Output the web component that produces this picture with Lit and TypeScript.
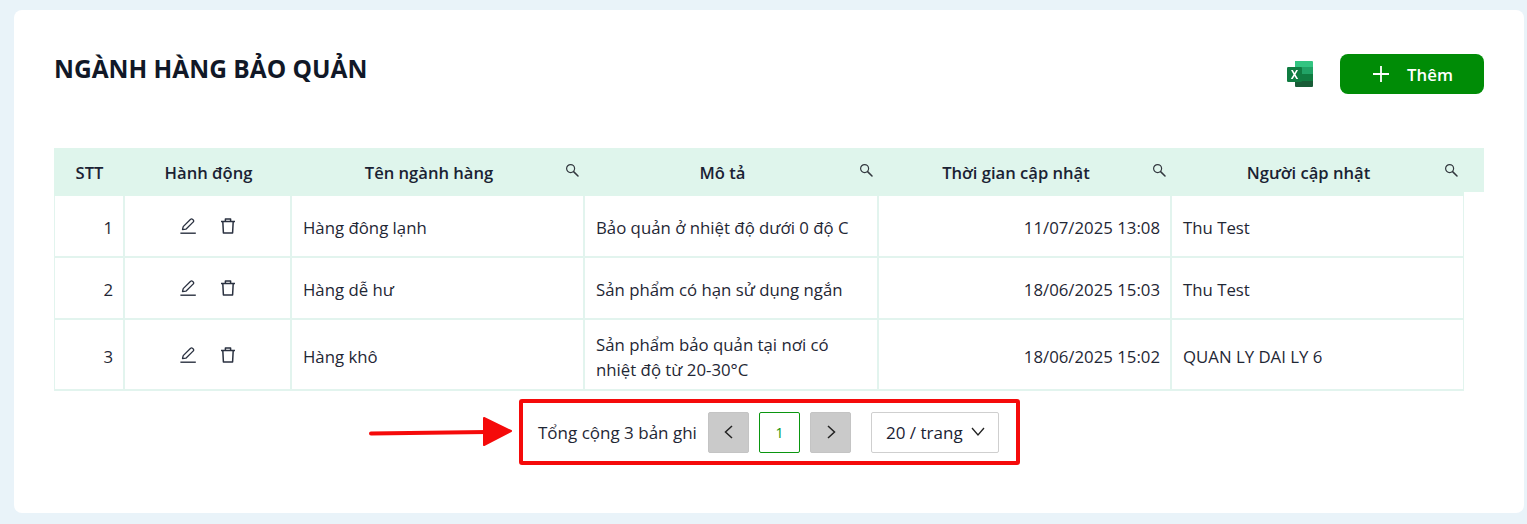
import { LitElement, html, css, svg } from 'lit';
import { customElement } from 'lit/decorators.js';

interface Row {
  stt: number;
  name: string;
  desc: string;
  time: string;
  user: string;
}

const ROWS: Row[] = [
  { stt: 1, name: 'Hàng đông lạnh', desc: 'Bảo quản ở nhiệt độ dưới 0 độ C', time: '11/07/2025 13:08', user: 'Thu Test' },
  { stt: 2, name: 'Hàng dễ hư', desc: 'Sản phẩm có hạn sử dụng ngắn', time: '18/06/2025 15:03', user: 'Thu Test' },
  { stt: 3, name: 'Hàng khô', desc: 'Sản phẩm bảo quản tại nơi có nhiệt độ từ 20-30°C', time: '18/06/2025 15:02', user: 'QUAN LY DAI LY 6' },
];

const searchIcon = svg`<svg class="search" width="14" height="14" viewBox="0 0 14 14" fill="none" stroke="#33383f" stroke-width="1.2"><circle cx="5.6" cy="5.6" r="4"/><path d="M8.6 8.6 13 13" stroke-linecap="round" stroke-width="1.5"/></svg>`;

@customElement('app-root')
export class AppRoot extends LitElement {
  static styles = css`
    :host {
      display: block;
      height: 524px;
      box-sizing: border-box;
      padding: 10px 3px 11px 14px;
      background: #e9f3f9;
      font-family: 'Open Sans', 'Noto Sans', sans-serif;
      color: #1a2233;
    }
    .card {
      position: relative;
      height: 100%;
      box-sizing: border-box;
      padding: 44px 40px 0;
      background: #fff;
      border-radius: 8px;
    }
    .top {
      display: flex;
      justify-content: space-between;
      align-items: flex-start;
      height: 94px;
    }
    h1 {
      margin: 0;
      font-size: 24.5px;
      line-height: 30px;
      font-weight: 700;
      color: #111827;
    }
    .tools {
      display: flex;
      align-items: center;
      gap: 25px;
    }
    .excel { display: block; }
    .add {
      display: flex;
      align-items: center;
      justify-content: center;
      gap: 16px;
      width: 144px;
      height: 40px;
      padding: 0;
      border: none;
      border-radius: 8px;
      background: #008c06;
      color: #fff;
      font: 600 16.8px 'Open Sans', sans-serif;
    }
    .table { position: relative; width: 1430px; }
    .band {
      position: absolute;
      top: 0;
      left: 0;
      right: 0;
      height: 44px;
      background: #dff5ec;
    }
    .grid {
      position: relative;
      display: grid;
      grid-template-columns: 71px 167px 293px 294px 293px 292px;
      width: 1410px;
    }
    .th {
      display: flex;
      align-items: center;
      justify-content: center;
      position: relative;
      box-sizing: border-box;
      height: 48px;
      background: #dff5ec;
      font-size: 16.6px;
      font-weight: 600;
      color: #1a2233;
    }
    .th.has-search { padding-right: 19px; }
    .search { position: absolute; right: 6px; top: 15px; }
    .td {
      display: flex;
      align-items: center;
      box-sizing: border-box;
      padding: 2px 10px 0 11px;
      font-size: 16.8px;
      line-height: 25px;
      color: #1f2735;
      border-right: 2px solid #e2f4ee;
      border-bottom: 2px solid #e2f4ee;
    }
    .td.first { border-left: 1px solid #e2f4ee; }
    .td.num { justify-content: flex-end; }
    .td.acts { justify-content: center; gap: 20px; padding-top: 0; }
    .td.last { border-right-width: 1px; }
    .r1 { height: 62px; }
    .r3 { height: 71px; padding-top: 4px; }
    .pager-wrap {
      display: flex;
      margin: 8px 0 0 465px;
    }
    .pager {
      display: flex;
      align-items: center;
      box-sizing: border-box;
      width: 501px;
      height: 66px;
      padding: 0 15px;
      border: 4px solid #f50a0a;
      border-radius: 3px;
      font-size: 17px;
    }
    .total { width: 170px; color: #1f2735; white-space: nowrap; }
    .page {
      display: flex;
      align-items: center;
      justify-content: center;
      box-sizing: border-box;
      width: 41px;
      height: 41px;
      border-radius: 2px;
      background: #cacaca;
      border: 1px solid #c4c4c4;
    }
    .page.cur {
      margin: 0 10px;
      background: #fff;
      border: 1px solid #0a960f;
      color: #0a960f;
      font-size: 14px;
    }
    .size {
      display: flex;
      align-items: center;
      justify-content: space-between;
      box-sizing: border-box;
      width: 128px;
      height: 41px;
      margin-left: 20px;
      padding: 0 13px 0 14px;
      border: 1px solid #cfcfcf;
      border-radius: 2px;
      white-space: nowrap;
    }
    .arrow { position: absolute; left: 355px; top: 405px; }
  `;

  private _head(label: string, search = true) {
    return html`<div class="th ${search ? 'has-search' : ''}">${label}${search ? searchIcon : ''}</div>`;
  }

  private _row(r: Row) {
    const h = r.stt === 3 ? 'r3' : 'r1';
    return html`
      <div class="td first num ${h}">${r.stt}</div>
      <div class="td acts ${h}">
        <svg width="20" height="20" viewBox="0 0 20 20" fill="none" stroke="#2a3140" stroke-width="1.3" stroke-linejoin="round">
          <path d="M4.5 13.5 5.2 10.6 12.6 3.2a1.3 1.3 0 0 1 1.9 0l.8.8a1.3 1.3 0 0 1 0 1.9L7.9 13.2 4.5 13.5Z"/>
          <path d="M2.4 17.2h15.4" stroke-width="1.4"/>
        </svg>
        <svg width="20" height="20" viewBox="0 0 20 20" fill="none" stroke="#2a3140" stroke-width="1.5" stroke-linejoin="round">
          <path d="M3 5.5h14M7.4 5.5V3h5.2v2.5"/>
          <path d="M4.8 5.5 5.4 17h9.2l.6-11.5"/>
        </svg>
      </div>
      <div class="td ${h}">${r.name}</div>
      <div class="td ${h}">${r.desc}</div>
      <div class="td num ${h}">${r.time}</div>
      <div class="td last ${h}">${r.user}</div>
    `;
  }

  render() {
    return html`
      <div class="card">
        <div class="top">
          <h1>NGÀNH HÀNG BẢO QUẢN</h1>
          <div class="tools">
            <svg class="excel" width="28" height="28" viewBox="0 0 28 28">
              <path d="M8 1h17a1 1 0 0 1 1 1v5H8Z" fill="#33c481"/>
              <rect x="8" y="7" width="18" height="7" fill="#21a366"/>
              <rect x="8" y="14" width="18" height="7" fill="#107c41"/>
              <path d="M8 21h18v5a1 1 0 0 1-1 1H9a1 1 0 0 1-1-1Z" fill="#185c37"/>
              <rect x="0" y="7" width="15" height="15" rx="1.2" fill="#107c41"/>
              <path d="M4 10l2.500 4.500L3.800 19h1.900l1.800-3.100L9.300 19h1.900l-2.700-4.500L11 10H9.200L7.500 13.100 5.800 10Z" fill="#fff"/>
            </svg>
            <button class="add">
              <svg width="20" height="20" viewBox="0 0 20 20" stroke="#fff" stroke-width="1.8" fill="none"><path d="M10 2v16M2 10h16"/></svg>
              Thêm
            </button>
          </div>
        </div>
        <div class="table">
          <div class="band"></div>
          <div class="grid">
            ${this._head('STT', false)}
            ${this._head('Hành động', false)}
            ${this._head('Tên ngành hàng')}
            ${this._head('Mô tả')}
            ${this._head('Thời gian cập nhật')}
            ${this._head('Người cập nhật')}
            ${ROWS.map(r => this._row(r))}
          </div>
        </div>
        <div class="pager-wrap">
          <div class="pager">
            <span class="total">Tổng cộng 3 bản ghi</span>
            <div class="page">
              <svg width="14" height="14" viewBox="0 0 14 14" fill="none" stroke="#222" stroke-width="1.500"><path d="M10 1 3.500 7l6.500 6"/></svg>
            </div>
            <div class="page cur">1</div>
            <div class="page">
              <svg width="14" height="14" viewBox="0 0 14 14" fill="none" stroke="#222" stroke-width="1.500"><path d="M4 1l6.500 6L4 13"/></svg>
            </div>
            <div class="size">
              <span>20 / trang</span>
              <svg width="14" height="14" viewBox="0 0 14 14" fill="none" stroke="#222" stroke-width="1.300"><path d="M1 3l6 7 6-7"/></svg>
            </div>
          </div>
        </div>
        <svg class="arrow" width="150" height="40" viewBox="0 0 150 40">
          <path d="M2 18.500 118 17" stroke="#f50a0a" stroke-width="4" stroke-linecap="round"/>
          <path d="M115 3 142 16 115 30Z" fill="#f50a0a" stroke="#f50a0a" stroke-width="2" stroke-linejoin="round"/>
        </svg>
      </div>
    `;
  }
}

declare global {
  interface HTMLElementTagNameMap {
    'app-root': AppRoot;
  }
}
